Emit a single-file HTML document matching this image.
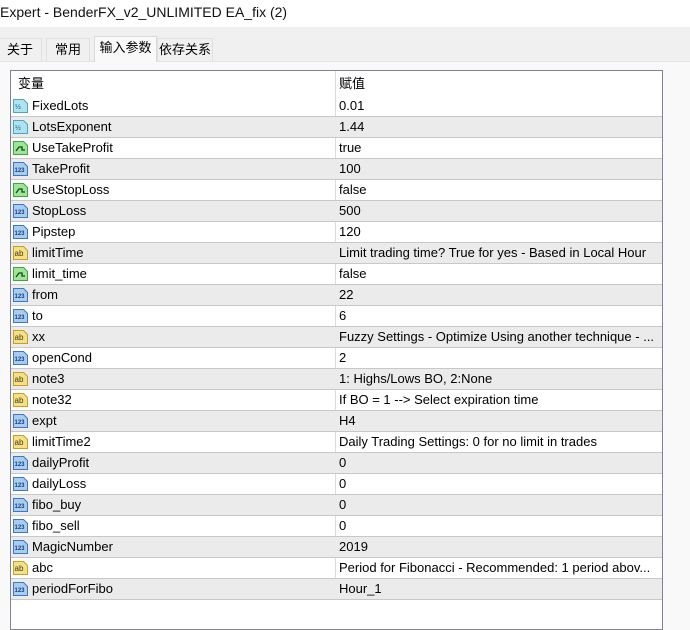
<!DOCTYPE html>
<html><head><meta charset="utf-8"><style>
body{margin:0;width:690px;height:613px;overflow:hidden;background:#f9f9f9;font-family:"Liberation Sans","Noto Sans CJK SC",sans-serif;font-size:13px;color:#000;position:relative}
.title{position:absolute;left:0;top:0;width:690px;height:27px;background:#fff;line-height:24px;font-size:14px;color:#111}
.tabbar{position:absolute;left:0;top:27px;width:690px;height:34px;background:#f0f0f0;border-bottom:1px solid #e3e3e3}
.tab{position:absolute;top:11px;height:23px;background:#f0f0f0;border:1px solid #e0e0e0;border-bottom:none;line-height:22px;font-size:13px;text-align:center;box-sizing:border-box}
.tab.act{top:9px;height:26px;background:#f9f9f9;border-color:#d9d9d9}
.list{position:absolute;left:10px;top:70px;width:653px;height:560px;background:#fff;border:1px solid #828290;box-sizing:border-box;overflow:hidden}
.hdr{height:25px;line-height:25px;position:relative}
.row{height:20px;border-bottom:1px solid #c8c8c8;position:relative;line-height:20px}
.row.o{background:#ebebeb}
.c1{position:absolute;left:21px}
.c2{position:absolute;left:328px;white-space:nowrap}
.div{position:absolute;left:324px;top:0;width:1px;height:529px;background:#dcdcdc}
.ic{position:absolute;left:2px;top:3px;width:15px;height:14px}
</style></head><body>
<div class="title">Expert - BenderFX_v2_UNLIMITED EA_fix (2)</div>
<div class="tabbar">
<div class="tab" style="left:-2px;width:44px">关于</div>
<div class="tab" style="left:46px;width:44px">常用</div>
<div class="tab act" style="left:94px;width:63px">输入参数</div>
<div class="tab" style="left:157px;width:56px">依存关系</div>
</div>
<svg width="0" height="0" style="position:absolute"><defs>
<symbol id="h" viewBox="0 0 15 14"><path d="M.5 .5h10l4 4v9H.5z" fill="#aee3ef" stroke="#4aa6c6"/><text x="2" y="10" font-size="7" font-family="Liberation Sans" fill="#1c5f80">½</text></symbol>
<symbol id="b" viewBox="0 0 15 14"><path d="M.5 .5h10l4 4v9H.5z" fill="#9ee59a" stroke="#3aa83a"/><path d="M3 10l3-4h3v3h3" stroke="#114d11" fill="none" stroke-width="1.3"/></symbol>
<symbol id="n" viewBox="0 0 15 14"><path d="M.5 .5h10l4 4v9H.5z" fill="#a9cdf0" stroke="#3a78c0"/><text x="1.5" y="10" font-size="6" font-family="Liberation Sans" font-weight="bold" fill="#1a3f80">123</text></symbol>
<symbol id="a" viewBox="0 0 15 14"><path d="M.5 .5h10l4 4v9H.5z" fill="#f3e08a" stroke="#c8a020"/><text x="1.5" y="10" font-size="8" font-family="Liberation Sans" fill="#4a3a00">ab</text></symbol>
</defs></svg>
<div class="list">
<div class="hdr"><span class="c1" style="left:7px">变量</span><span class="c2">赋值</span></div>
<div class="div"></div>
<div class="row"><svg class="ic"><use href="#h"/></svg><span class="c1">FixedLots</span><span class="c2">0.01</span></div>
<div class="row o"><svg class="ic"><use href="#h"/></svg><span class="c1">LotsExponent</span><span class="c2">1.44</span></div>
<div class="row"><svg class="ic"><use href="#b"/></svg><span class="c1">UseTakeProfit</span><span class="c2">true</span></div>
<div class="row o"><svg class="ic"><use href="#n"/></svg><span class="c1">TakeProfit</span><span class="c2">100</span></div>
<div class="row"><svg class="ic"><use href="#b"/></svg><span class="c1">UseStopLoss</span><span class="c2">false</span></div>
<div class="row o"><svg class="ic"><use href="#n"/></svg><span class="c1">StopLoss</span><span class="c2">500</span></div>
<div class="row"><svg class="ic"><use href="#n"/></svg><span class="c1">Pipstep</span><span class="c2">120</span></div>
<div class="row o"><svg class="ic"><use href="#a"/></svg><span class="c1">limitTime</span><span class="c2">Limit trading time? True for yes - Based in Local Hour</span></div>
<div class="row"><svg class="ic"><use href="#b"/></svg><span class="c1">limit_time</span><span class="c2">false</span></div>
<div class="row o"><svg class="ic"><use href="#n"/></svg><span class="c1">from</span><span class="c2">22</span></div>
<div class="row"><svg class="ic"><use href="#n"/></svg><span class="c1">to</span><span class="c2">6</span></div>
<div class="row o"><svg class="ic"><use href="#a"/></svg><span class="c1">xx</span><span class="c2">Fuzzy Settings - Optimize Using another technique - ...</span></div>
<div class="row"><svg class="ic"><use href="#n"/></svg><span class="c1">openCond</span><span class="c2">2</span></div>
<div class="row o"><svg class="ic"><use href="#a"/></svg><span class="c1">note3</span><span class="c2">1: Highs/Lows BO, 2:None</span></div>
<div class="row"><svg class="ic"><use href="#a"/></svg><span class="c1">note32</span><span class="c2">If BO = 1 --&gt; Select expiration time</span></div>
<div class="row o"><svg class="ic"><use href="#n"/></svg><span class="c1">expt</span><span class="c2">H4</span></div>
<div class="row"><svg class="ic"><use href="#a"/></svg><span class="c1">limitTime2</span><span class="c2">Daily Trading Settings: 0 for no limit in trades</span></div>
<div class="row o"><svg class="ic"><use href="#n"/></svg><span class="c1">dailyProfit</span><span class="c2">0</span></div>
<div class="row"><svg class="ic"><use href="#n"/></svg><span class="c1">dailyLoss</span><span class="c2">0</span></div>
<div class="row o"><svg class="ic"><use href="#n"/></svg><span class="c1">fibo_buy</span><span class="c2">0</span></div>
<div class="row"><svg class="ic"><use href="#n"/></svg><span class="c1">fibo_sell</span><span class="c2">0</span></div>
<div class="row o"><svg class="ic"><use href="#n"/></svg><span class="c1">MagicNumber</span><span class="c2">2019</span></div>
<div class="row"><svg class="ic"><use href="#a"/></svg><span class="c1">abc</span><span class="c2">Period for Fibonacci - Recommended: 1 period abov...</span></div>
<div class="row o"><svg class="ic"><use href="#n"/></svg><span class="c1">periodForFibo</span><span class="c2">Hour_1</span></div>
</div>
</body></html>
